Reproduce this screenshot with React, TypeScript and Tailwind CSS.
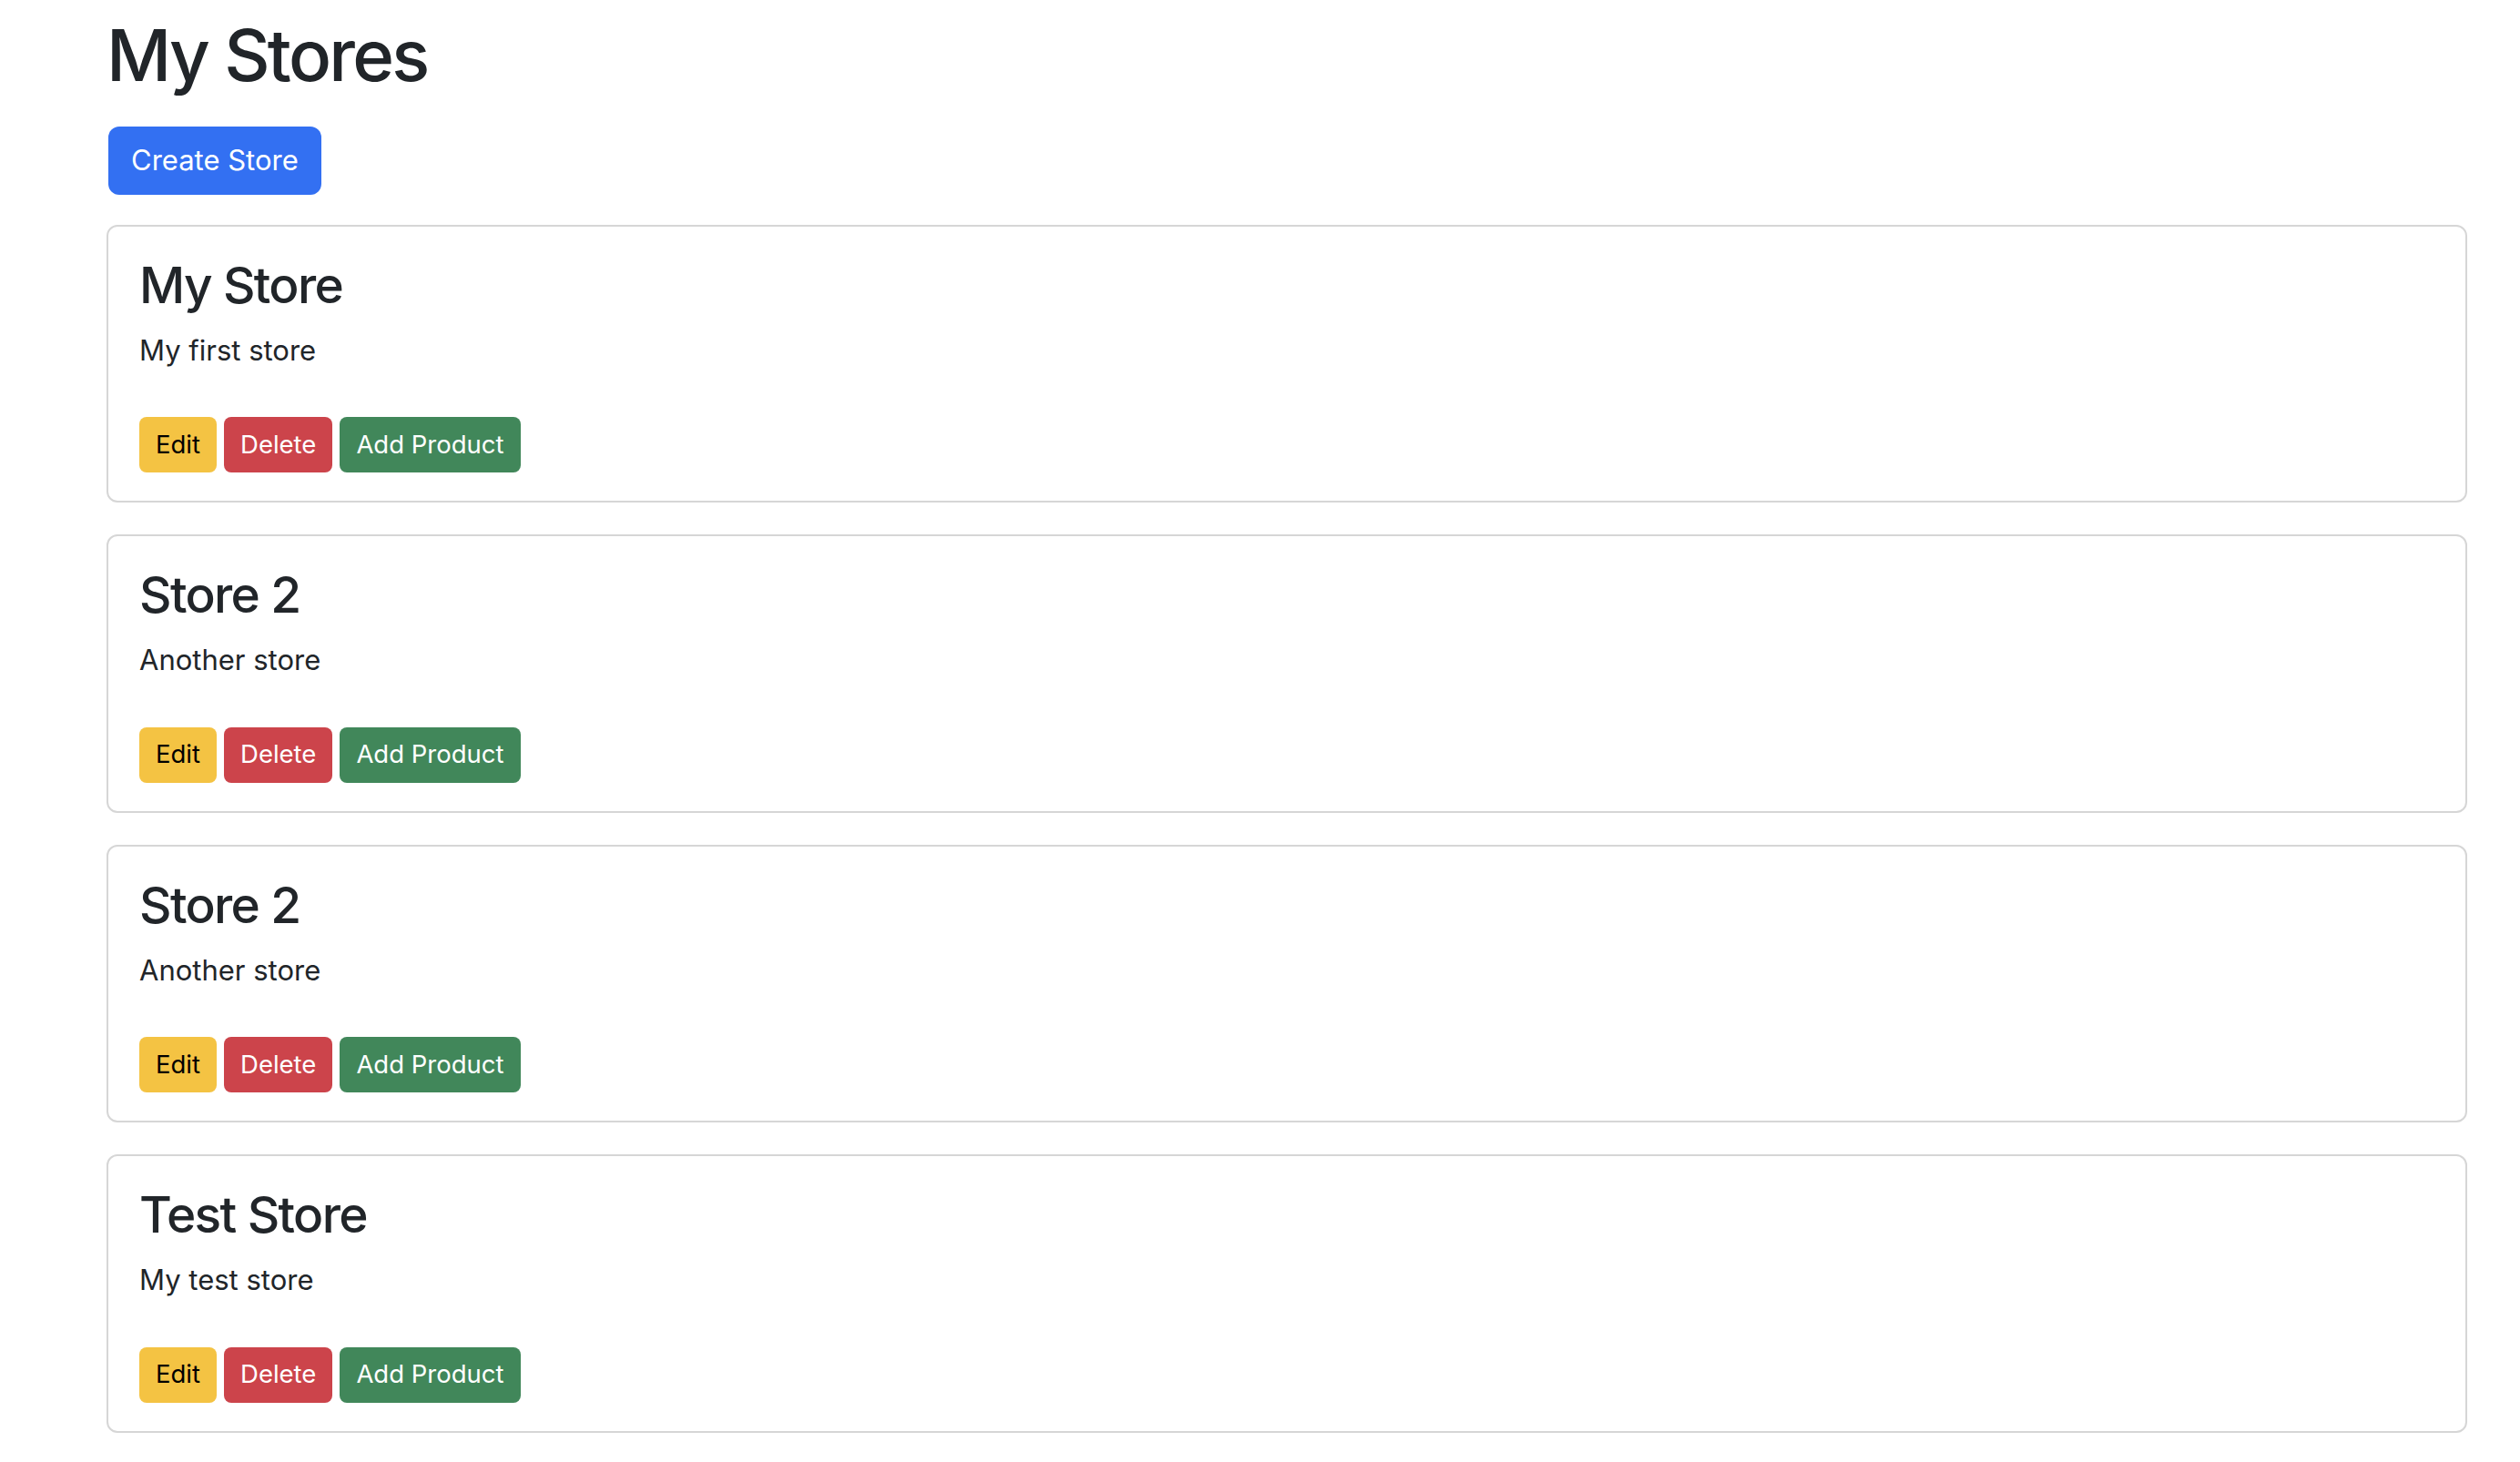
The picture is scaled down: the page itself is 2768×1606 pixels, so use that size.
const STORES = [
  { id: 1, name: 'My Store', description: 'My first store' },
  { id: 2, name: 'Store 2', description: 'Another store' },
  { id: 3, name: 'Store 2', description: 'Another store' },
  { id: 4, name: 'Test Store', description: 'My test store' },
];

function StoreCard({ name, description }: { name: string; description: string }) {
  return (
    <div className="border-2 border-[#d6d6d6] rounded-[12px] bg-white mb-[35px]">
      <div className="py-[31px] px-[34px]">
        <h3 className="text-[55px] leading-[1.2] font-medium tracking-[-0.03em] text-[#212529] mb-[16px]">{name}</h3>
        <p className="text-[31px] leading-[1.5] text-[#212529] mb-[50px]">{description}</p>
        <div className="flex gap-[8px]">
          <button
            type="button"
            className="h-[61px] px-[18px] rounded-[8px] bg-[#f4c343] text-black text-[27.5px]"
          >
            Edit
          </button>
          <button
            type="button"
            className="h-[61px] px-[18px] rounded-[8px] bg-[#cc444b] text-white text-[27.5px]"
          >
            Delete
          </button>
          <button
            type="button"
            className="h-[61px] px-[18px] rounded-[8px] bg-[#41875a] text-white text-[27.5px]"
          >
            Add Product
          </button>
        </div>
      </div>
    </div>
  );
}

export default function App() {
  return (
    <div className="min-h-screen bg-white pl-[117px] pt-[14px] font-['Inter',_'Noto_Sans',_sans-serif]">
      <div className="w-[2593px]">
        <h1 className="text-[78px] leading-[1.2] font-medium tracking-[-0.035em] text-[#212529] mb-[31px]">My Stores</h1>
        <button
          type="button"
          className="ml-[2px] h-[75px] px-[25px] rounded-[12px] bg-[#3370f2] text-white text-[31px] mb-[33px]"
        >
          Create Store
        </button>
        {STORES.map(s => (
          <StoreCard key={s.id} name={s.name} description={s.description} />
        ))}
      </div>
    </div>
  );
}
